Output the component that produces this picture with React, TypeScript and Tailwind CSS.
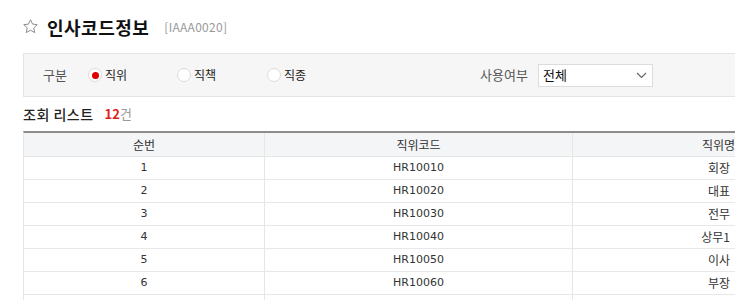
import React from "react";

const rows = [
  ["1", "HR10010", "회장"],
  ["2", "HR10020", "대표"],
  ["3", "HR10030", "전무"],
  ["4", "HR10040", "상무1"],
  ["5", "HR10050", "이사"],
  ["6", "HR10060", "부장"],
  ["", "", ""],
];

function Radio({ checked, label }: { checked?: boolean; label: string }) {
  return (
    <div className="flex items-center gap-[3px]">
      <span className="w-[14px] h-[14px] rounded-full bg-white border border-[#dcdcdc] flex items-center justify-center">
        {checked && <span className="w-[7px] h-[7px] rounded-full bg-[#dd0000]" />}
      </span>
      <span className="text-[12px] text-[#222]">{label}</span>
    </div>
  );
}

const num = { fontFamily: '"DejaVu Sans", sans-serif', fontSize: 11 };

export default function App() {
  const font = { fontFamily: '"Noto Sans CJK KR", "Liberation Sans", sans-serif' };
  return (
    <div className="w-[735px] h-[300px] overflow-hidden bg-white" style={font}>
      <div className="w-[760px] pl-[23px]">
        <div className="h-[53px] flex items-center">
          <svg width="17" height="17" viewBox="0 0 24 24" className="ml-[-1px]" fill="none" stroke="#8a8a8a" strokeWidth="1.4" strokeLinejoin="round">
            <path d="M12 2.5l2.9 6.1 6.6.8-4.9 4.6 1.3 6.6L12 17.3l-5.9 3.3 1.3-6.6-4.9-4.6 6.6-.8z" />
          </svg>
          <span className="ml-[8px] text-[18px] font-bold text-[#111] leading-none tracking-[0.5px]">인사코드정보</span>
          <span className="ml-[15px] text-[12px] text-[#999] leading-none tracking-[0.3px]">[IAAA0020]</span>
        </div>
        <div className="h-[44px] bg-[#f6f6f6] border border-[#e4e4e4] flex items-center">
          <span className="ml-[19px] w-[45px] text-[13px] text-[#555]">구분</span>
          <div className="w-[89px]"><Radio checked label="직위" /></div>
          <div className="w-[90px]"><Radio label="직책" /></div>
          <div className="w-[213px]"><Radio label="직종" /></div>
          <span className="w-[58px] text-[13px] text-[#555]">사용여부</span>
          <div className="w-[115px] h-[23px] bg-white border border-[#dcdcdc] flex items-center justify-between px-[4px]">
            <span className="text-[13px] text-[#111]">전체</span>
            <svg width="11" height="7" viewBox="0 0 11 7" fill="none" stroke="#666" strokeWidth="1.2" className="mr-[1px]">
              <path d="M1 1l4.5 4.5L10 1" />
            </svg>
          </div>
        </div>
        <div className="h-[34px] flex items-center">
          <span className="text-[14px] font-medium text-[#222] tracking-[0.5px]">조회 리스트</span>
          <span className="ml-[11px] text-[13px] font-bold text-[#e02020]">12</span>
          <span className="text-[13px] text-[#999]">건</span>
        </div>
        <div className="border-t-2 border-[#8c8c8c] border-l border-l-[#e6e6e6]">
          <div className="grid grid-cols-[241px_308px_172px] h-[24px] bg-[#f4f5f7] border-b border-[#e6e6e6] text-[12px] text-[#333]">
            <div className="flex items-center justify-center border-r border-[#e6e6e6]">순번</div>
            <div className="flex items-center justify-center border-r border-[#e6e6e6]">직위코드</div>
            <div className="flex items-center justify-end pr-[10px]">직위명</div>
          </div>
          {rows.map((r, i) => (
            <div key={i} className="grid grid-cols-[241px_308px_172px] h-[23px] border-b border-[#e8e8e8] text-[12px] text-[#333]">
              <div className="flex items-center justify-center border-r border-[#e6e6e6]" style={num}>{r[0]}</div>
              <div className="flex items-center justify-center border-r border-[#e6e6e6]" style={num}>{r[1]}</div>
              <div className="flex items-center justify-end pr-[15px]">{r[2]}</div>
            </div>
          ))}
        </div>
      </div>
    </div>
  );
}
